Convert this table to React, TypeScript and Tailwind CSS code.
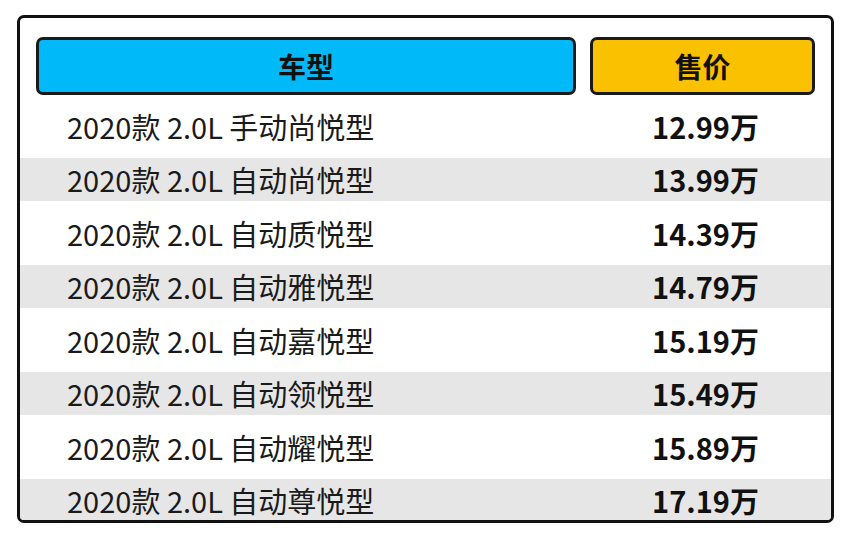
const rows = [
  { name: '2020款 2.0L 手动尚悦型', price: '12.99万' },
  { name: '2020款 2.0L 自动尚悦型', price: '13.99万' },
  { name: '2020款 2.0L 自动质悦型', price: '14.39万' },
  { name: '2020款 2.0L 自动雅悦型', price: '14.79万' },
  { name: '2020款 2.0L 自动嘉悦型', price: '15.19万' },
  { name: '2020款 2.0L 自动领悦型', price: '15.49万' },
  { name: '2020款 2.0L 自动耀悦型', price: '15.89万' },
  { name: '2020款 2.0L 自动尊悦型', price: '17.19万' },
]

export default function App() {
  return (
    <div
      className="h-[548px] w-[852px] bg-white pl-[17px] pt-[15px]"
      style={{ fontFamily: '"Noto Sans CJK SC", "Noto Sans", sans-serif' }}
    >
      <div className="h-[508px] w-[817px] overflow-hidden rounded-[7px] border-[3px] border-[#111] bg-white">
        {/* Header */}
        <div className="flex gap-[14px] px-[16px] pt-[19px]">
          <div className="flex h-[58px] w-[540px] items-center justify-center rounded-[7px] border-[3px] border-[#1a1a1a] bg-[#00b9f8] text-[28px] font-bold leading-none text-[#111]">
            车型
          </div>
          <div className="flex h-[58px] w-[225px] items-center justify-center rounded-[7px] border-[3px] border-[#1a1a1a] bg-[#fac100] text-[28px] font-bold leading-none text-[#111]">
            售价
          </div>
        </div>

        {/* Rows */}
        <div className="mt-[9.5px] flex flex-col gap-[10.5px]">
          {rows.map((row, i) => (
            <div
              key={row.price}
              className={
                'flex h-[43px] items-center ' + (i % 2 === 1 ? 'bg-[#e6e6e6]' : 'bg-white')
              }
            >
              <div className="w-[570px] pl-[47px] text-[29px] leading-none text-[#1a1a1a]">
                {row.name}
              </div>
              <div className="w-[225px] pl-[6px] text-center text-[29px] font-bold leading-none text-[#111]">
                {row.price}
              </div>
            </div>
          ))}
        </div>
      </div>
    </div>
  )
}
